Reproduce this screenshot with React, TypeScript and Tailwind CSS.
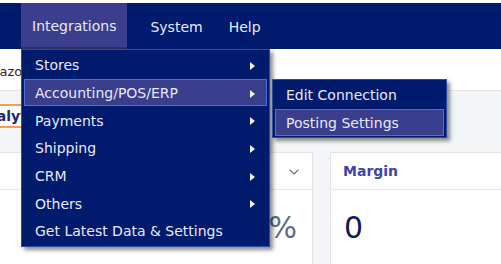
import { ChevronDown } from "lucide-react";

// Top nav with the Integrations menu open, submenu for Accounting/POS/ERP.

const items = [
  { label: "Stores", sub: true },
  { label: "Accounting/POS/ERP", sub: true, active: true },
  { label: "Payments", sub: true },
  { label: "Shipping", sub: true },
  { label: "CRM", sub: true },
  { label: "Others", sub: true },
  { label: "Get Latest Data & Settings", sub: false },
];

const subItems = [
  { label: "Edit Connection" },
  { label: "Posting Settings", active: true },
];

function Arrow() {
  return (
    <svg width="5" height="8" viewBox="0 0 5 8" className="shrink-0">
      <polygon points="0,0 5,4 0,8" fill="#f2f2f7" />
    </svg>
  );
}

function MenuRow({ label, sub, active }: { label: string; sub?: boolean; active?: boolean }) {
  return (
    <div
      className={
        active
          ? "h-[27.7px] flex items-center justify-between pl-[10px] pr-[11px] pt-[2px] bg-[#3a3e8c] border border-[#4a73cc]"
          : "h-[27.7px] flex items-center justify-between pl-[11px] pr-[12px] pt-[2px]"
      }
    >
      <span className="whitespace-nowrap">{label}</span>
      {sub && <Arrow />}
    </div>
  );
}

export default function App() {
  return (
    <div className="relative w-[501px] h-[264px] overflow-hidden bg-white font-['DejaVu_Sans',Verdana,sans-serif] text-[14px]">
      <div className="h-[3px] bg-white" />
      <nav className="h-[46px] bg-[#001a6e] flex items-stretch pl-[21px] text-[#e9e9f2]">
        <div className="relative">
          <div className="h-full flex items-center pt-[2px] px-[11px] bg-[#3a3e8c] border-b-2 border-[#2b2f66]">
            Integrations
          </div>
          {/* dropdown */}
          <div className="absolute left-0 top-[46px] z-10 w-[249px] bg-[#001a6e] border border-[#2c4c9e] px-[2px] py-px shadow-[3px_3px_4px_rgba(0,0,0,0.45)]">
            {items.map((it) => (
              <MenuRow key={it.label} {...it} />
            ))}
            {/* submenu */}
            <div className="absolute left-[250px] top-[29px] w-[175px] bg-[#001a6e] border border-[#2c4c9e] px-[2px] py-px shadow-[3px_3px_4px_rgba(0,0,0,0.45)]">
              {subItems.map((it) => (
                <MenuRow key={it.label} {...it} />
              ))}
            </div>
          </div>
        </div>
        <div className="flex items-center pt-[2px] ml-[23px]">System</div>
        <div className="flex items-center pt-[2px] ml-[26px]">Help</div>
      </nav>

      <div className="h-[41px] flex items-center pt-[4px] text-[13px] text-[#2b2b2b]">
        <span className="-ml-[22px]">Amazon</span>
      </div>

      <div className="h-[62px] bg-[#f4f5f7] border-t border-[#e3e4e8] pt-[13px]">
        <div className="w-[120px] -ml-[26px] h-[24px] bg-white border-y-2 border-[#f0a050] flex items-center pl-[2px] font-bold text-[14px] text-[#1b2a6b]">
          Analytics
        </div>
      </div>

      <div className="flex gap-[17px] bg-[#f4f5f7] h-[112px]">
        <div className="w-[313px] bg-white border-t border-r border-[#e3e4e8] flex flex-col">
          <div className="h-[37px] border-b border-[#e6e7ea] flex items-center justify-end pr-[10px] pt-[2px]">
            <ChevronDown size={16} strokeWidth={1.6} className="text-[#6b6f7a]" />
          </div>
          <div className="flex justify-end pr-[15px] pt-[23px] text-[30px] leading-none text-[#5b6c8a]">
            0%
          </div>
        </div>
        <div className="flex-1 bg-white border-t border-l border-[#e3e4e8] flex flex-col">
          <div className="h-[37px] border-b border-[#e6e7ea] flex items-center pl-[12px] pt-[1px] font-bold text-[14px] text-[#3d45a0]">
            Margin
          </div>
          <div className="pl-[13px] pt-[23px] text-[30px] leading-none text-[#0f1c5c]">0</div>
        </div>
      </div>
    </div>
  );
}
